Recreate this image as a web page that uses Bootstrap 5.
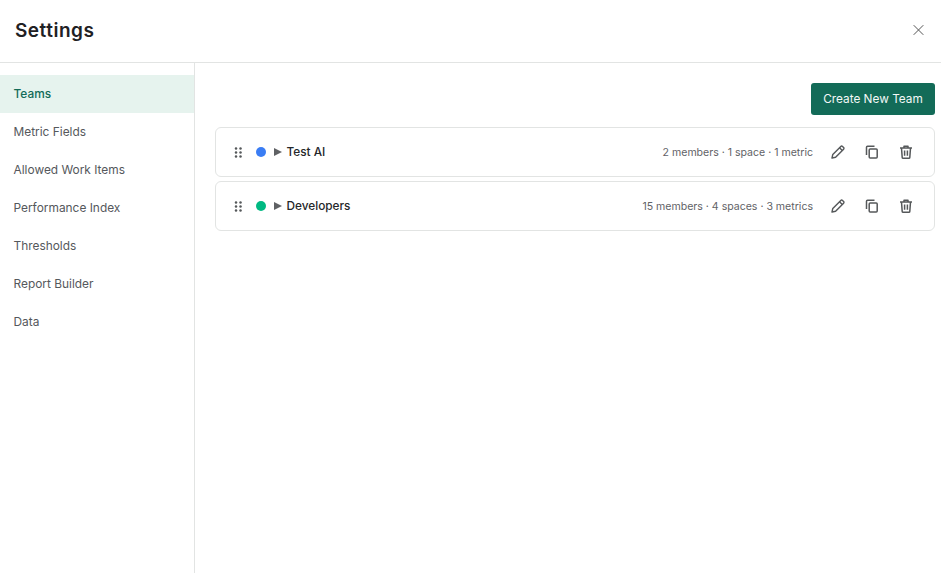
<!doctype html>
<html lang="en">
<head>
<meta charset="utf-8">
<title>Settings</title>
<link rel="stylesheet" href="https://cdn.jsdelivr.net/npm/bootstrap@5.3.0/dist/css/bootstrap.min.css">
<style>
html,body{height:100%}
body{font-family:Inter,"Liberation Sans",sans-serif;color:#1f2124;background:#fff;overflow:hidden}
.settings-head{height:63px;padding:0 17px 0 15px;border-bottom:1px solid #e2e4e3}
.settings-title{font-size:19px;font-weight:600;letter-spacing:.5px;color:#1f2124;margin:0}
.close-x{color:#555;line-height:0}
.close-x svg{display:block;margin-bottom:2px}
.settings-body{height:510px}
.side{width:195px;padding-top:12px;border-right:1px solid #e2e4e3;flex:none}
.side a{display:flex;align-items:center;height:38px;padding:0 13.5px;font-size:11.9px;color:#55585c;text-decoration:none}
.side a.active{background:#e6f3ee;color:#136b58;font-weight:500}
.main{padding:20px 6px 0 20px}
.btn-create{background:#136b58;color:#f4f8f7;font-size:11.8px;height:32px;width:124px;padding:2px 0 0;border:0;border-radius:3px}
.btn-create:hover{background:#136b58;color:#fff}
.team{height:50px;border:1px solid #e2e4e3;border-radius:6px;padding:0 20px 0 18px;margin-bottom:4px}
.team-first{margin-top:12px}
.grip,.dot{flex:none}
.dot{width:10px;height:10px;border-radius:50%;margin-left:13px}
.caret{width:0;height:0;border-left:8px solid #5f6164;border-top:4px solid transparent;border-bottom:4px solid transparent;margin-left:8px;flex:none}
.name{font-size:11.8px;font-weight:500;margin-left:4.5px;padding-top:2px;color:#25272a}
.meta{font-size:10.55px;color:#5f6266;margin-right:17px;padding-top:2px;white-space:nowrap}
.acts{gap:18px;line-height:0}
.acts svg{color:#55585a;display:block}
</style>
</head>
<body>
<header class="settings-head d-flex align-items-center justify-content-between">
  <h1 class="settings-title">Settings</h1>
  <span class="close-x"><svg width="11" height="10" viewBox="0 0 11 10" fill="none" stroke="currentColor" stroke-width="1" aria-hidden="true"><path d="M.7.2l9.6 9.6M10.3.2L.7 9.8"/></svg></span>
</header>
<div class="settings-body d-flex">
  <nav class="side">
    <a class="active" href="#">Teams</a>
    <a href="#">Metric Fields</a>
    <a href="#">Allowed Work Items</a>
    <a href="#">Performance Index</a>
    <a href="#">Thresholds</a>
    <a href="#">Report Builder</a>
    <a href="#">Data</a>
  </nav>
  <main class="main flex-grow-1">
    <div class="d-flex justify-content-end">
      <button class="btn btn-create" type="button">Create New Team</button>
    </div>
    <div class="team team-first d-flex align-items-center">
      <svg class="grip" width="9" height="11" viewBox="0 0 9 11" fill="#55585a" aria-hidden="true"><circle cx="2" cy="1.5" r="1.25"/><circle cx="6.5" cy="1.5" r="1.25"/><circle cx="2" cy="5.5" r="1.25"/><circle cx="6.5" cy="5.5" r="1.25"/><circle cx="2" cy="9.5" r="1.25"/><circle cx="6.5" cy="9.5" r="1.25"/></svg>
      <span class="dot" style="background:#3a7df4"></span>
      <span class="caret"></span>
      <span class="name">Test AI</span>
      <span class="meta ms-auto">2 members · 1 space · 1 metric</span>
      <div class="acts d-flex">
        <svg width="16" height="16" viewBox="0 0 16 16" fill="none" stroke="currentColor" stroke-width="1.4" stroke-linejoin="round" aria-hidden="true"><path d="M2 14l.8-3.6L10.8 2.4a1.2 1.2 0 0 1 1.7 0l1.1 1.1a1.2 1.2 0 0 1 0 1.7L5.6 13.2z"/><path d="M9.5 3.7l2.8 2.8"/></svg>
        <svg width="16" height="16" viewBox="0 0 16 16" fill="none" stroke="currentColor" stroke-width="1.5" stroke-linejoin="round" aria-hidden="true"><rect x="5.2" y="5" width="8" height="9" rx="1"/><path d="M2.5 11V3.2c0-.6.4-1 1-1h7"/></svg>
        <svg width="16" height="16" viewBox="0 0 16 16" fill="none" stroke="currentColor" stroke-width="1.5" stroke-linejoin="round" aria-hidden="true"><path d="M2 4h12M6 4V2.2h4V4M3.5 4l.7 9.4c0 .5.5.9 1 .9h5.6c.5 0 1-.4 1-.9l.7-9.4M6.6 6.5v5.2M9.4 6.5v5.2"/></svg>
      </div>
    </div>
    <div class="team d-flex align-items-center">
      <svg class="grip" width="9" height="11" viewBox="0 0 9 11" fill="#55585a" aria-hidden="true"><circle cx="2" cy="1.5" r="1.25"/><circle cx="6.5" cy="1.5" r="1.25"/><circle cx="2" cy="5.5" r="1.25"/><circle cx="6.5" cy="5.5" r="1.25"/><circle cx="2" cy="9.5" r="1.25"/><circle cx="6.5" cy="9.5" r="1.25"/></svg>
      <span class="dot" style="background:#00b982"></span>
      <span class="caret"></span>
      <span class="name">Developers</span>
      <span class="meta ms-auto">15 members · 4 spaces · 3 metrics</span>
      <div class="acts d-flex">
        <svg width="16" height="16" viewBox="0 0 16 16" fill="none" stroke="currentColor" stroke-width="1.4" stroke-linejoin="round" aria-hidden="true"><path d="M2 14l.8-3.6L10.8 2.4a1.2 1.2 0 0 1 1.7 0l1.1 1.1a1.2 1.2 0 0 1 0 1.7L5.6 13.2z"/><path d="M9.5 3.7l2.8 2.8"/></svg>
        <svg width="16" height="16" viewBox="0 0 16 16" fill="none" stroke="currentColor" stroke-width="1.5" stroke-linejoin="round" aria-hidden="true"><rect x="5.2" y="5" width="8" height="9" rx="1"/><path d="M2.5 11V3.2c0-.6.4-1 1-1h7"/></svg>
        <svg width="16" height="16" viewBox="0 0 16 16" fill="none" stroke="currentColor" stroke-width="1.5" stroke-linejoin="round" aria-hidden="true"><path d="M2 4h12M6 4V2.2h4V4M3.5 4l.7 9.4c0 .5.5.9 1 .9h5.6c.5 0 1-.4 1-.9l.7-9.4M6.6 6.5v5.2M9.4 6.5v5.2"/></svg>
      </div>
    </div>
  </main>
</div>
<script src="https://cdn.jsdelivr.net/npm/bootstrap@5.3.0/dist/js/bootstrap.bundle.min.js"></script>
</body>
</html>
